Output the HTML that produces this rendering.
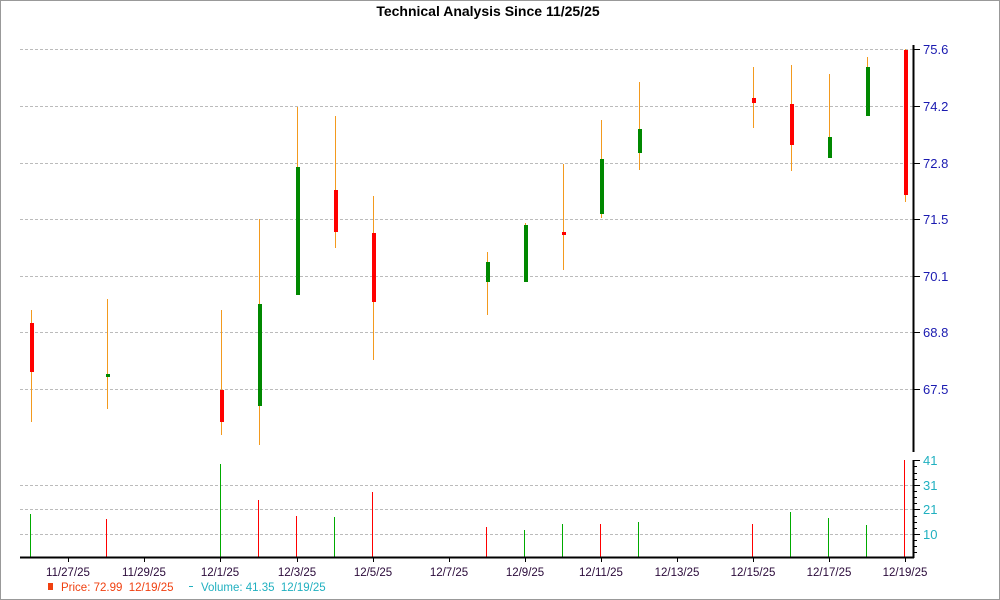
<!DOCTYPE html>
<html><head><meta charset="utf-8"><style>
html,body{margin:0;padding:0;background:#fff;}
svg{display:block;font-family:"Liberation Sans",Arial,sans-serif;}
</style></head><body>
<svg width="1000" height="600" viewBox="0 0 1000 600" xmlns="http://www.w3.org/2000/svg">
<rect x="0.5" y="0.5" width="999" height="599" fill="#fff" stroke="#999"/>
<text x="488" y="16" text-anchor="middle" font-size="14" font-weight="bold" fill="#000">Technical Analysis Since 11/25/25</text>
<g stroke="#bbb" stroke-dasharray="3,2" stroke-width="1">
<line x1="20" y1="49.5" x2="913" y2="49.5"/><line x1="20" y1="106.5" x2="913" y2="106.5"/>
<line x1="20" y1="163.5" x2="913" y2="163.5"/><line x1="20" y1="219.5" x2="913" y2="219.5"/>
<line x1="20" y1="276.5" x2="913" y2="276.5"/><line x1="20" y1="332.5" x2="913" y2="332.5"/>
<line x1="20" y1="389.5" x2="913" y2="389.5"/>
<line x1="20" y1="485.5" x2="913" y2="485.5"/><line x1="20" y1="509.5" x2="913" y2="509.5"/>
<line x1="20" y1="534.5" x2="913" y2="534.5"/>
</g>
<!-- wicks -->
<g fill="#f39a1e">
<rect x="31" y="310" width="1" height="112"/><rect x="107" y="299" width="1" height="110"/>
<rect x="221" y="310" width="1" height="125"/><rect x="259" y="219" width="1" height="226"/>
<rect x="297" y="107" width="1" height="188"/><rect x="335" y="116" width="1" height="132"/>
<rect x="373" y="196" width="1" height="164"/><rect x="487" y="252" width="1" height="63"/>
<rect x="525" y="223" width="1" height="59"/><rect x="563" y="164" width="1" height="106"/>
<rect x="601" y="120" width="1" height="98"/><rect x="639" y="82" width="1" height="88"/>
<rect x="753" y="67" width="1" height="61"/><rect x="791" y="65" width="1" height="106"/>
<rect x="829" y="74" width="1" height="84"/><rect x="867" y="57" width="1" height="59"/>
<rect x="905" y="49" width="1" height="153"/>
</g>
<g>
<rect x="30" y="323" width="4" height="49" fill="#f00"/>
<rect x="106" y="374" width="4" height="3" fill="#080"/>
<rect x="220" y="390" width="4" height="32" fill="#f00"/>
<rect x="258" y="304" width="4" height="102" fill="#080"/>
<rect x="296" y="167" width="4" height="128" fill="#080"/>
<rect x="334" y="190" width="4" height="42" fill="#f00"/>
<rect x="372" y="233" width="4" height="69" fill="#f00"/>
<rect x="486" y="262" width="4" height="20" fill="#080"/>
<rect x="524" y="225" width="4" height="57" fill="#080"/>
<rect x="562" y="232" width="4" height="3" fill="#f00"/>
<rect x="600" y="159" width="4" height="55" fill="#080"/>
<rect x="638" y="129" width="4" height="24" fill="#080"/>
<rect x="752" y="98" width="4" height="5" fill="#f00"/>
<rect x="790" y="104" width="4" height="41" fill="#f00"/>
<rect x="828" y="137" width="4" height="21" fill="#080"/>
<rect x="866" y="67" width="4" height="49" fill="#080"/>
<rect x="904" y="50" width="4" height="145" fill="#f00"/>
</g>
<!-- volume -->
<g stroke-width="1">
<line x1="30.5" y1="514" x2="30.5" y2="557" stroke="#0a0"/>
<line x1="106.5" y1="519" x2="106.5" y2="557" stroke="#f00"/>
<line x1="220.5" y1="464" x2="220.5" y2="557" stroke="#0a0"/>
<line x1="258.5" y1="500" x2="258.5" y2="557" stroke="#f00"/>
<line x1="296.5" y1="516" x2="296.5" y2="557" stroke="#f00"/>
<line x1="334.5" y1="517" x2="334.5" y2="557" stroke="#0a0"/>
<line x1="372.5" y1="492" x2="372.5" y2="557" stroke="#f00"/>
<line x1="486.5" y1="527" x2="486.5" y2="557" stroke="#f00"/>
<line x1="524.5" y1="530" x2="524.5" y2="557" stroke="#0a0"/>
<line x1="562.5" y1="524" x2="562.5" y2="557" stroke="#0a0"/>
<line x1="600.5" y1="524" x2="600.5" y2="557" stroke="#f00"/>
<line x1="638.5" y1="522" x2="638.5" y2="557" stroke="#0a0"/>
<line x1="752.5" y1="524" x2="752.5" y2="557" stroke="#f00"/>
<line x1="790.5" y1="512" x2="790.5" y2="557" stroke="#0a0"/>
<line x1="828.5" y1="518" x2="828.5" y2="557" stroke="#0a0"/>
<line x1="866.5" y1="525" x2="866.5" y2="557" stroke="#0a0"/>
<line x1="904.5" y1="460" x2="904.5" y2="557" stroke="#f00"/>
</g>
<!-- axes -->
<g stroke="#000">
<line x1="913.5" y1="45" x2="913.5" y2="452" stroke-width="2"/>
<line x1="913.5" y1="460" x2="913.5" y2="558" stroke-width="2"/>
<line x1="20" y1="557.5" x2="914" y2="557.5" stroke-width="2"/>
<line x1="913" y1="49.5" x2="920" y2="49.5"/><line x1="913" y1="106.5" x2="920" y2="106.5"/>
<line x1="913" y1="163.5" x2="920" y2="163.5"/><line x1="913" y1="219.5" x2="920" y2="219.5"/>
<line x1="913" y1="276.5" x2="920" y2="276.5"/><line x1="913" y1="332.5" x2="920" y2="332.5"/>
<line x1="913" y1="389.5" x2="920" y2="389.5"/>
<line x1="913" y1="460.5" x2="920" y2="460.5"/><line x1="913" y1="485.5" x2="920" y2="485.5"/>
<line x1="913" y1="509.5" x2="920" y2="509.5"/><line x1="913" y1="534.5" x2="920" y2="534.5"/>
<line x1="913" y1="466.5" x2="917" y2="466.5"/><line x1="913" y1="473.5" x2="917" y2="473.5"/><line x1="913" y1="479.5" x2="917" y2="479.5"/>
<line x1="913" y1="491.5" x2="917" y2="491.5"/><line x1="913" y1="497.5" x2="917" y2="497.5"/><line x1="913" y1="503.5" x2="917" y2="503.5"/>
<line x1="913" y1="516.5" x2="917" y2="516.5"/><line x1="913" y1="522.5" x2="917" y2="522.5"/><line x1="913" y1="528.5" x2="917" y2="528.5"/>
<line x1="913" y1="540.5" x2="917" y2="540.5"/><line x1="913" y1="546.5" x2="917" y2="546.5"/><line x1="913" y1="552.5" x2="917" y2="552.5"/>
<line x1="68.5" y1="557" x2="68.5" y2="562"/><line x1="144.5" y1="557" x2="144.5" y2="562"/>
<line x1="220.5" y1="557" x2="220.5" y2="562"/><line x1="297.5" y1="557" x2="297.5" y2="562"/>
<line x1="373.5" y1="557" x2="373.5" y2="562"/><line x1="449.5" y1="557" x2="449.5" y2="562"/>
<line x1="525.5" y1="557" x2="525.5" y2="562"/><line x1="601.5" y1="557" x2="601.5" y2="562"/>
<line x1="677.5" y1="557" x2="677.5" y2="562"/><line x1="753.5" y1="557" x2="753.5" y2="562"/>
<line x1="829.5" y1="557" x2="829.5" y2="562"/><line x1="905.5" y1="557" x2="905.5" y2="562"/>
</g>
<g font-size="13" fill="#1a1ab0">
<text x="923" y="54">75.6</text><text x="923" y="111">74.2</text><text x="923" y="168">72.8</text>
<text x="923" y="224">71.5</text><text x="923" y="281">70.1</text><text x="923" y="337">68.8</text>
<text x="923" y="394">67.5</text>
</g>
<g font-size="13" fill="#20b0c0">
<text x="923" y="465">41</text><text x="923" y="490">31</text><text x="923" y="514">21</text><text x="923" y="539">10</text>
</g>
<g font-size="11.5" fill="#2a0a3a" text-anchor="middle">
<text x="68" y="576">11/27/25</text><text x="144" y="576">11/29/25</text><text x="220" y="576">12/1/25</text>
<text x="297" y="576">12/3/25</text><text x="373" y="576">12/5/25</text><text x="449" y="576">12/7/25</text>
<text x="525" y="576">12/9/25</text><text x="601" y="576">12/11/25</text><text x="677" y="576">12/13/25</text>
<text x="753" y="576">12/15/25</text><text x="829" y="576">12/17/25</text><text x="905" y="576">12/19/25</text>
</g>
<rect x="48" y="583" width="5" height="7" fill="#f04010"/>
<text x="61" y="591" font-size="11.5" fill="#f04010" xml:space="preserve">Price: 72.99  12/19/25</text>
<line x1="189" y1="586.5" x2="193" y2="586.5" stroke="#20b0c0"/>
<text x="201" y="591" font-size="11.5" fill="#20b0c0" xml:space="preserve">Volume: 41.35  12/19/25</text>
</svg>
</body></html>
